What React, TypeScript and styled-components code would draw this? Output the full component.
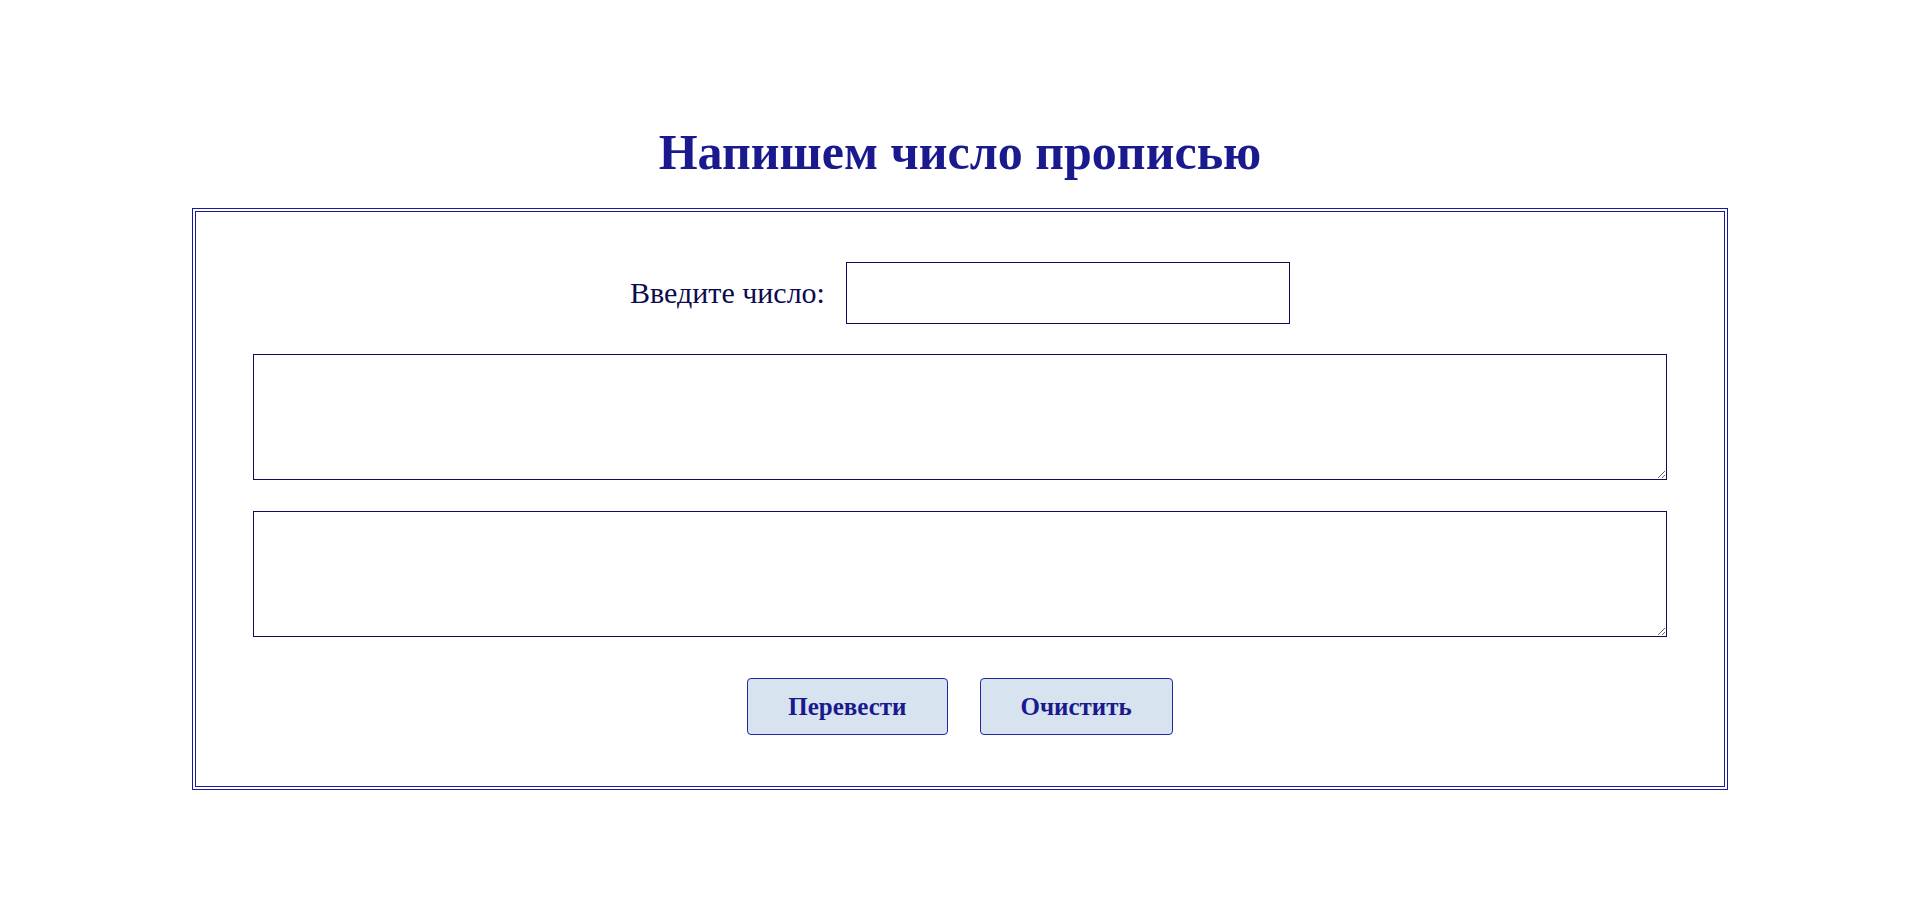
import React from "react";
import styled, { createGlobalStyle } from "styled-components";

const GlobalStyle = createGlobalStyle`
  html, body {
    margin: 0;
    padding: 0;
    background: #fff;
    font-family: "Liberation Serif", "Times New Roman", serif;
  }
`;

const App = () => {
  return (
    <>
      <GlobalStyle />
      <Page>
        <Title>Напишем число прописью</Title>

        <Frame>
          <InputRow>
            <Label htmlFor="number">Введите число:</Label>
            <NumberInput id="number" type="text" autoFocus />
          </InputRow>

          <ResultArea />
          <ResultArea />

          <ButtonRow>
            <ActionButton type="button">Перевести</ActionButton>
            <ActionButton type="button">Очистить</ActionButton>
          </ButtonRow>
        </Frame>
      </Page>
    </>
  );
};

const Page = styled.main`
  width: 100%;
  min-height: 918px;
  padding-top: 122px;
  box-sizing: border-box;

  display: flex;
  flex-direction: column;
  align-items: center;
`;

const Title = styled.h1`
  margin: 0 0 26px;

  color: #1a1a8e;
  font-size: 50px;
  font-weight: 700;
  line-height: 60px;
  text-align: center;
`;

const Frame = styled.section`
  width: 80%;
  padding: 50px 57px 51px;
  box-sizing: border-box;

  display: flex;
  flex-direction: column;
  align-items: stretch;

  border: 4px double #1a1a9a;
`;

const InputRow = styled.div`
  display: flex;
  align-items: center;
  justify-content: center;
  gap: 21px;
`;

const Label = styled.label`
  color: #0b0b4e;
  font-size: 30px;
  line-height: 1.15;
`;

const NumberInput = styled.input`
  width: 444px;
  height: 62px;
  padding: 0 8px;
  box-sizing: border-box;

  border: 1px solid #0c0c5c;
  border-radius: 0;
  outline: none;

  color: #0b0b4e;
  caret-color: #0c0c5c;
  font-family: "Liberation Serif", "Times New Roman", serif;
  font-size: 35px;
  text-align: center;
`;

const ResultArea = styled.textarea`
  height: 126px;
  margin-top: 30px;
  box-sizing: border-box;

  border: 1px solid #0c0c5c;
  outline: none;

  color: #0b0b4e;
  font-family: "Liberation Serif", "Times New Roman", serif;
  font-size: 24px;

  & + & {
    margin-top: 31px;
  }
`;

const ButtonRow = styled.div`
  margin-top: 41px;

  display: flex;
  justify-content: center;
  gap: 32px;
`;

const ActionButton = styled.button`
  height: 57px;
  padding: 0 40px;

  background: #d7e3ee;
  border: 1px solid #2626a2;
  border-radius: 4px;

  color: #1a1a8e;
  font-family: "Liberation Serif", "Times New Roman", serif;
  font-size: 25px;
  font-weight: 700;
  cursor: pointer;
`;

export default App;
